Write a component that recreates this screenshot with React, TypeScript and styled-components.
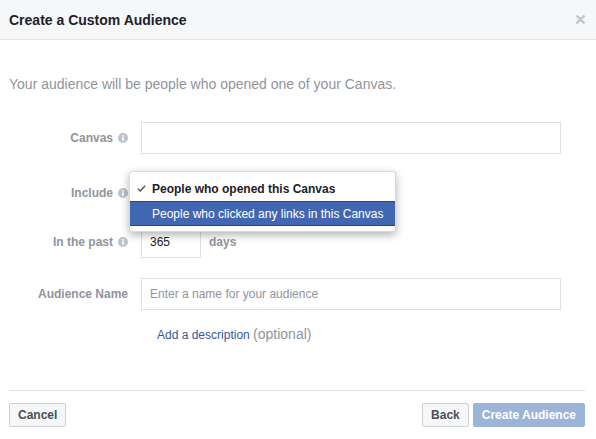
import React from "react";
import styled, { createGlobalStyle } from "styled-components";

const GlobalStyle = createGlobalStyle`
  html, body {
    margin: 0;
    padding: 0;
    background: #fff;
  }
  body {
    font-family: "Liberation Sans", Helvetica, Arial, sans-serif;
    -webkit-font-smoothing: antialiased;
  }
`;

const Dialog = styled.div`
  width: 596px;
  height: 439px;
  background: #fff;
  display: flex;
  flex-direction: column;
  position: relative;
`;

const Header = styled.div`
  height: 39px;
  flex: none;
  background: #f6f7f9;
  border-bottom: 1px solid #e5e5e5;
  display: flex;
  align-items: center;
  justify-content: space-between;
  padding: 0 10px 0 9px;
`;

const Title = styled.h1`
  margin: 0;
  font-size: 14px;
  font-weight: bold;
  color: #1d2129;
  line-height: 18px;
`;

const CloseButton = styled.button`
  border: none;
  background: none;
  padding: 0;
  width: 12px;
  height: 12px;
  display: flex;
  align-items: center;
  justify-content: center;
  cursor: pointer;
`;

const Body = styled.div`
  flex: 1;
  padding: 0 9px;
`;

const Intro = styled.p`
  margin: 35px 0 29px;
  font-size: 14px;
  line-height: 18px;
  color: #90949c;
`;

const Form = styled.div`
  display: flex;
  flex-direction: column;
  gap: 20px;
  position: relative;
`;

const Row = styled.div`
  display: grid;
  grid-template-columns: 119px 1fr;
  column-gap: 13px;
  align-items: center;
  min-height: 32px;
`;

const Label = styled.label<{ $shift?: number }>`
  display: flex;
  align-items: center;
  justify-content: flex-end;
  gap: 5px;
  margin-top: ${(p) => (p.$shift ? `${p.$shift}px` : "0")};
  font-size: 12px;
  font-weight: bold;
  color: #90949c;
`;

const Field = styled.div`
  display: flex;
  align-items: center;
`;

const TextInput = styled.input<{ $width?: number }>`
  box-sizing: border-box;
  width: ${(p) => (p.$width ? `${p.$width}px` : "420px")};
  height: 32px;
  border: 1px solid #dddfe2;
  border-radius: 0;
  padding: 0 8px;
  font-family: inherit;
  font-size: 12px;
  color: #1d2129;
  outline: none;

  &::placeholder {
    color: #90949c;
  }
`;

const Unit = styled.span`
  margin-left: 8px;
  font-size: 12px;
  font-weight: bold;
  color: #90949c;
`;

const Menu = styled.ul`
  position: absolute;
  left: 120px;
  top: 49px;
  width: 265px;
  margin: 0;
  padding: 4px 0 5px;
  list-style: none;
  background: #fff;
  border: 1px solid rgba(0, 0, 0, 0.15);
  border-radius: 3px;
  box-shadow: 0 3px 8px rgba(0, 0, 0, 0.3);
  z-index: 10;
`;

const MenuItem = styled.li<{ $active?: boolean; $selected?: boolean }>`
  display: flex;
  align-items: center;
  height: ${(p) => (p.$active ? "23px" : "25px")};
  padding: 0 10px 0 7px;
  font-size: 12px;
  font-weight: ${(p) => (p.$selected ? "bold" : "normal")};
  color: ${(p) => (p.$active ? "#fff" : "#1d2129")};
  background: ${(p) => (p.$active ? "#4267b2" : "transparent")};
  border-top: ${(p) => (p.$active ? "1px solid #29487d" : "none")};
  border-bottom: ${(p) => (p.$active ? "1px solid #29487d" : "none")};
  white-space: nowrap;
`;

const CheckSlot = styled.span`
  width: 15px;
  flex: none;
  display: flex;
  align-items: center;
`;

const Description = styled.div`
  padding-left: 148px;
  margin-top: 16px;
  font-size: 12px;
  line-height: 16px;
  color: #90949c;
`;

const Link = styled.a`
  color: #365899;
  text-decoration: none;
  cursor: pointer;
`;

const Optional = styled.span`
  font-size: 14px;
`;

const Footer = styled.div`
  flex: none;
  margin: 0 11px 0 9px;
  border-top: 1px solid #dddfe2;
  padding: 12px 0;
  display: flex;
  align-items: center;
  justify-content: space-between;
`;

const ButtonGroup = styled.div`
  display: flex;
  gap: 4px;
`;

const Button = styled.button<{ $primary?: boolean; $disabled?: boolean }>`
  box-sizing: border-box;
  height: 24px;
  padding: 0 8px;
  font-family: inherit;
  font-size: 12px;
  font-weight: bold;
  border-radius: 2px;
  border: 1px solid ${(p) => (p.$primary ? "#9cb4d8" : "#ced0d4")};
  background: ${(p) => (p.$primary ? "#9cb4d8" : "#f6f7f9")};
  color: ${(p) => (p.$primary ? "#fff" : "#4b4f56")};
  cursor: ${(p) => (p.$disabled ? "default" : "pointer")};
`;

const InfoIcon = () => (
  <svg width="10" height="10" viewBox="0 0 10 10">
    <circle cx="5" cy="5" r="5" fill="#bec2c9" />
    <rect x="4.2" y="4.2" width="1.6" height="3.6" fill="#fff" />
    <circle cx="5" cy="2.8" r="0.9" fill="#fff" />
  </svg>
);

const CloseIcon = () => (
  <svg width="11" height="11" viewBox="0 0 11 11">
    <path d="M1.5 1.5 L9.5 9.5 M9.5 1.5 L1.5 9.5" stroke="#bec2c9" strokeWidth="2.2" />
  </svg>
);

const CheckIcon = () => (
  <svg width="9" height="7" viewBox="0 0 9 7">
    <path d="M0.8 3.6 L3.2 6 L8.2 0.8" fill="none" stroke="#4b4f56" strokeWidth="1.3" />
  </svg>
);

const App = () => {
  return (
    <>
      <GlobalStyle />
      <Dialog>
        <Header>
          <Title>Create a Custom Audience</Title>
          <CloseButton aria-label="Close">
            <CloseIcon />
          </CloseButton>
        </Header>
        <Body>
          <Intro>Your audience will be people who opened one of your Canvas.</Intro>
          <Form>
            <Row>
              <Label>
                Canvas <InfoIcon />
              </Label>
              <Field>
                <TextInput />
              </Field>
            </Row>
            <Row>
              <Label $shift={5}>
                Include <InfoIcon />
              </Label>
              <Field />
            </Row>
            <Row>
              <Label>
                In the past <InfoIcon />
              </Label>
              <Field>
                <TextInput $width={60} defaultValue="365" />
                <Unit>days</Unit>
              </Field>
            </Row>
            <Row>
              <Label>Audience Name</Label>
              <Field>
                <TextInput placeholder="Enter a name for your audience" />
              </Field>
            </Row>
            <Menu>
              <MenuItem $selected>
                <CheckSlot>
                  <CheckIcon />
                </CheckSlot>
                People who opened this Canvas
              </MenuItem>
              <MenuItem $active>
                <CheckSlot />
                People who clicked any links in this Canvas
              </MenuItem>
            </Menu>
          </Form>
          <Description>
            <Link>Add a description</Link> <Optional>(optional)</Optional>
          </Description>
        </Body>
        <Footer>
          <Button>Cancel</Button>
          <ButtonGroup>
            <Button>Back</Button>
            <Button $primary $disabled>
              Create Audience
            </Button>
          </ButtonGroup>
        </Footer>
      </Dialog>
    </>
  );
};

export default App;
